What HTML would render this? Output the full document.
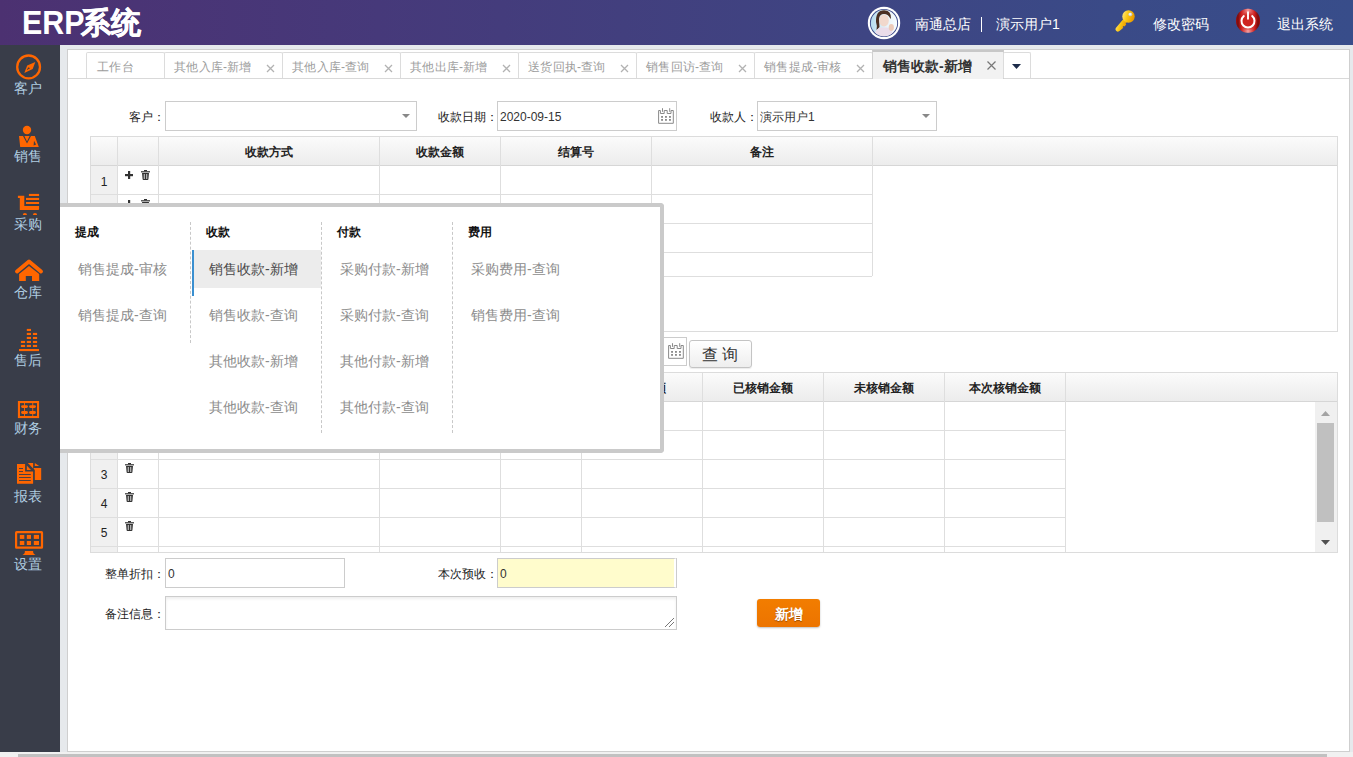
<!DOCTYPE html><html><head><meta charset="utf-8"><style>
*{box-sizing:border-box;margin:0;padding:0}
html,body{width:1353px;height:757px;overflow:hidden;background:#e6e9ec;font-family:"Liberation Sans",sans-serif;font-size:12px;color:#333}
div,span{position:absolute}
.t{white-space:nowrap;line-height:1}
#hdr{left:0;top:0;width:1353px;height:45px;background:linear-gradient(to right,#4c3171 0%,#4a3475 10%,#46397a 28%,#423f7e 46%,#3e4583 64%,#3a4a87 82%,#384d8a 100%)}
.ht{color:#fff;font-size:14px;top:17px}
#side{left:0;top:45px;width:60px;height:707px;background:#393d49}
.sl{left:-2px;width:60px;text-align:center;color:#b0cee2;font-size:14px}
.tab{top:52px;height:26px;border:1px solid #dcdcdc;border-bottom:none;background:#fff;border-radius:2px 2px 0 0}
.tabt{top:61px;color:#9c9c9c;font-size:12px;letter-spacing:0.25px}
.tabx{color:#a8a8a8;font-size:15px;top:59px}
.ln{background:#dedede}
.hd{font-weight:bold;color:#222;font-size:12px;text-align:center}
.lbl{font-size:12px;color:#222;text-align:right}
.inp{border:1px solid #ccc;background:#fff}
.pi{color:#8c8c8c;font-size:14px}
.ph{color:#111;font-size:12px;font-weight:bold}
.dash{width:0;border-left:1px dashed #c8c8c8}
</style></head><body>
<div id="hdr"></div>
<div class="t" style="left:22px;top:6px;color:#fff;font-size:33px;font-weight:bold;transform:scaleX(0.92);transform-origin:0 0">ERP</div>
<div class="t" style="left:81px;top:8px;color:#fff;font-size:30px;font-weight:900;-webkit-text-stroke:0.5px #fff">系统</div>
<svg style="position:absolute;left:867px;top:6px" width="34" height="34" viewBox="0 0 34 34">
<defs><linearGradient id="ab" x1="0" y1="0" x2="1" y2="0"><stop offset="0" stop-color="#a9d6ec"/><stop offset="0.55" stop-color="#e6f2f8"/><stop offset="1" stop-color="#ffffff"/></linearGradient>
<clipPath id="ac"><circle cx="17" cy="17" r="13.2"/></clipPath></defs>
<circle cx="17" cy="17" r="16.2" fill="#fff"/>
<circle cx="17" cy="17" r="14.1" fill="#3a4888"/>
<g clip-path="url(#ac)">
<rect x="0" y="0" width="34" height="34" fill="url(#ab)"/>
<path d="M9 16 Q8.5 4.5 17 4.3 Q24.5 4.5 24 13 L23 12 Q21 8 17 8 Q12.5 8 12 13 L12.5 21 Q11 23 9.5 24 Q10.5 20 9 16Z" fill="#4a2f22"/>
<ellipse cx="17" cy="14.5" rx="4.8" ry="6" fill="#f1d8cc"/>
<path d="M6 34 Q7 23 14 21.5 L20 21.5 Q26 23 28 34Z" fill="#eadcea"/>
<ellipse cx="24.3" cy="21.5" rx="2.6" ry="3.4" fill="#eccab8"/>
</g>
</svg>
<div class="t ht" style="left:915px">南通总店</div>
<div style="left:980.5px;top:17px;width:1.5px;height:15px;background:#fff"></div>
<div class="t ht" style="left:996px">演示用户1</div>
<svg style="position:absolute;left:1114px;top:8px" width="24" height="26" viewBox="0 0 24 26">
<defs><linearGradient id="kg" x1="0" y1="0" x2="1" y2="0.3"><stop offset="0" stop-color="#ffe98a"/><stop offset="0.5" stop-color="#fcc814"/><stop offset="1" stop-color="#e99a00"/></linearGradient></defs>
<path d="M9.2 11.2 L12.8 14.2 L11.6 15.6 L12.3 16.4 L10.4 18.5 L9.5 17.9 L8.6 19 L9.4 19.7 L5.4 23.1 Q3.2 24.5 1.9 22.6 Q1 21.2 1.8 20.1 Z" fill="url(#kg)"/>
<circle cx="14.5" cy="8.5" r="6.2" fill="url(#kg)"/>
<circle cx="16.3" cy="6.35" r="1.9" fill="#c9cfd6"/>
<circle cx="16.1" cy="6.1" r="1.1" fill="#f4f6f8"/>
</svg>
<div class="t ht" style="left:1153px">修改密码</div>
<svg style="position:absolute;left:1235px;top:8px" width="26" height="26" viewBox="0 0 26 26">
<defs><linearGradient id="pg" x1="0" y1="0" x2="1" y2="0"><stop offset="0" stop-color="#8a0000"/><stop offset="0.08" stop-color="#3a0000"/><stop offset="0.22" stop-color="#c81818"/><stop offset="0.5" stop-color="#ffd0d0"/><stop offset="0.78" stop-color="#c81818"/><stop offset="0.92" stop-color="#3a0000"/><stop offset="1" stop-color="#8a0000"/></linearGradient>
<radialGradient id="pr" cx="0.5" cy="0.5" r="0.5"><stop offset="0" stop-color="#cf2420"/><stop offset="0.62" stop-color="#cf2420"/><stop offset="1" stop-color="#cf2420" stop-opacity="0"/></radialGradient>
<linearGradient id="pv" x1="0" y1="0" x2="0" y2="1"><stop offset="0" stop-color="#e02a2a" stop-opacity="0.6"/><stop offset="0.5" stop-color="#c01818" stop-opacity="0.9"/><stop offset="1" stop-color="#e02a2a" stop-opacity="0.5"/></linearGradient></defs>
<circle cx="13" cy="12.7" r="12" fill="url(#pg)"/>
<circle cx="13" cy="12.7" r="12" fill="url(#pv)" opacity="0.55"/>
<circle cx="13" cy="13" r="9.5" fill="url(#pr)"/>
<path d="M8.82 8.02 A6.5 6.5 0 1 0 17.18 8.02" fill="none" stroke="#fff" stroke-width="2" stroke-linecap="round"/>
<line x1="13" y1="4.3" x2="13" y2="10.8" stroke="#fff" stroke-width="1.9" stroke-linecap="round"/>
</svg>
<div class="t ht" style="left:1277px">退出系统</div>
<div id="side"></div>
<svg style="position:absolute;left:14px;top:53px" width="30" height="28" viewBox="0 0 30 28"><circle cx="14.6" cy="13.9" r="11.4" fill="none" stroke="#ff6600" stroke-width="2.3"/><path d="M21.3 8.9 L18.7 15.9 L10.3 20.1 L13.2 12.5Z" fill="#ff6600"/><path d="M14.5 14.2 L16.2 15.3 L12.6 17Z" fill="#393d49"/></svg>
<div class="t sl" style="top:81px">客户</div>
<svg style="position:absolute;left:17px;top:124px" width="24" height="25" viewBox="0 0 24 25"><circle cx="10" cy="6" r="4.2" fill="#ff6600"/><path d="M2 12.1 L6 12.1 L10 19.4 L14 12.1 L17.8 12.1 L21.8 23.1 L3.2 23.1Z" fill="#ff6600"/><path d="M7.4 12.1 L12.6 12.1 L10 17.6Z" fill="#ff6600"/><path d="M17 16.7 L19.1 20.5 L16.6 21.4Z" fill="#393d49"/></svg>
<div class="t sl" style="top:149px">销售</div>
<svg style="position:absolute;left:17px;top:193px" width="24" height="24" viewBox="0 0 24 24"><path d="M0.9 2.8 L7.3 2.8 L7.3 13 L22.1 13 L22.1 16 Q22.1 17 21.1 17 L2.8 17 L2.8 5.1 L0.9 5.1Z" fill="#ff6600"/><rect x="11.9" y="0.9" width="10.2" height="2.1" fill="#ff6600"/><rect x="9" y="4.9" width="13.1" height="2.1" fill="#ff6600"/><rect x="9" y="9" width="13.1" height="2" fill="#ff6600"/><path d="M5.8 22 A2.1 2.1 0 0 1 10 22Z" fill="#ff6600"/><path d="M15.9 22 A2.1 2.1 0 0 1 20.1 22Z" fill="#ff6600"/></svg>
<div class="t sl" style="top:217px">采购</div>
<svg style="position:absolute;left:14px;top:257px" width="30" height="26" viewBox="0 0 30 26"><path d="M3 14.5 L15 4.4 L27 14.5" fill="none" stroke="#ff6600" stroke-width="3.9" stroke-linecap="round" stroke-linejoin="round"/><path d="M5.1 17.1 L15 9 L25.2 17.1 L25.2 24 L18 24 L18 19 L11.8 19 L11.8 24 L5.1 24Z" fill="#ff6600"/></svg>
<div class="t sl" style="top:285px">仓库</div>
<svg style="position:absolute;left:18px;top:328px" width="22" height="24" viewBox="0 0 22 24"><rect x="2.9" y="12.9" width="4.2" height="2.1" fill="#ff6600"/><rect x="2.9" y="16.9" width="4.2" height="2.1" fill="#ff6600"/><rect x="8.8" y="0.9" width="4.2" height="2.1" fill="#ff6600"/><rect x="8.8" y="4.9" width="4.2" height="2.1" fill="#ff6600"/><rect x="8.8" y="8.9" width="4.2" height="2.1" fill="#ff6600"/><rect x="8.8" y="12.9" width="4.2" height="2.1" fill="#ff6600"/><rect x="8.8" y="16.9" width="4.2" height="2.1" fill="#ff6600"/><rect x="14.9" y="4.9" width="4.2" height="2.1" fill="#ff6600"/><rect x="14.9" y="8.9" width="4.2" height="2.1" fill="#ff6600"/><rect x="14.9" y="12.9" width="4.2" height="2.1" fill="#ff6600"/><rect x="14.9" y="16.9" width="4.2" height="2.1" fill="#ff6600"/><rect x="1" y="21" width="20" height="2.1" fill="#ff6600"/></svg>
<div class="t sl" style="top:353px">售后</div>
<svg style="position:absolute;left:17px;top:400px" width="23" height="19" viewBox="0 0 23 19"><rect x="1.95" y="2.05" width="19.1" height="15" fill="none" stroke="#ff6600" stroke-width="2.1"/><rect x="7" y="3" width="0.9" height="13" fill="#ff6600"/><rect x="15.3" y="3" width="0.9" height="13" fill="#ff6600"/><rect x="4.1" y="5.2" width="6.8" height="2.8" rx="1.4" fill="#ff6600"/><rect x="12.1" y="5.2" width="6.8" height="2.8" rx="1.4" fill="#ff6600"/><rect x="4.1" y="11.1" width="6.8" height="2.8" rx="1.4" fill="#ff6600"/><rect x="12.1" y="11.1" width="6.8" height="2.8" rx="1.4" fill="#ff6600"/></svg>
<div class="t sl" style="top:421px">财务</div>
<svg style="position:absolute;left:17px;top:462px" width="26" height="24" viewBox="0 0 26 24"><path d="M0 1.9 L8.1 1.9 L8.1 9.5 L16.1 9.5 L16.1 21.8 L0 21.8Z" fill="#ff6600"/><rect x="2" y="6" width="4" height="0.9" fill="#393d49"/><rect x="2" y="9.1" width="4" height="0.9" fill="#393d49"/><rect x="2" y="12.1" width="11.8" height="0.9" fill="#393d49"/><rect x="2" y="15.1" width="11.8" height="0.9" fill="#393d49"/><rect x="2" y="18" width="11.8" height="0.9" fill="#393d49"/><path d="M9.8 3.6 L9.8 8 L14 8Z" fill="#ff6600"/><path d="M10.9 1.1 L16.1 1.1 L16.1 6.4Z" fill="#ff6600"/><path d="M17.8 1.1 L17.8 4 L22.1 4Z" fill="#ff6600"/><path d="M16.4 5.9 L24.2 5.9 L24.2 18 L17.8 18 L17.8 8.3Z" fill="#ff6600"/></svg>
<div class="t sl" style="top:489px">报表</div>
<svg style="position:absolute;left:14px;top:530px" width="30" height="26" viewBox="0 0 30 26"><rect x="2.1" y="2.2" width="25.9" height="15.5" rx="0.5" fill="none" stroke="#ff6600" stroke-width="2.2"/><rect x="5.8" y="4.9" width="4.5" height="4" fill="#ff6600"/><rect x="12.8" y="4.9" width="4.2" height="4" fill="#ff6600"/><rect x="19.8" y="4.9" width="5.2" height="4" fill="#ff6600"/><rect x="5.8" y="11" width="4.5" height="4" fill="#ff6600"/><rect x="12.8" y="11" width="4.2" height="4" fill="#ff6600"/><rect x="19.8" y="11" width="5.2" height="4" fill="#ff6600"/><path d="M10.9 20.9 L19.1 20.9 L19.3 23 Q19.8 24.2 21.5 25 L8.5 25 Q10.2 24.2 10.7 23Z" fill="#ff6600"/></svg>
<div class="t sl" style="top:557px">设置</div>
<div style="left:67px;top:49px;width:1283px;height:703px;background:#fff;border:1.5px solid #cfcfcf"></div>
<div class="ln" style="left:68px;top:78px;width:1281px;height:1px;background:#d9d9d9"></div>
<div class="tab" style="left:86px;width:79px"></div>
<div class="t tabt" style="left:97px">工作台</div>
<div class="tab" style="left:164px;width:119px"></div>
<div class="t tabt" style="left:174px">其他入库-新增</div>
<svg style="position:absolute;left:265.5px;top:63.5px" width="9" height="9" viewBox="0 0 9 9"><path d="M1 1 L8 8 M8 1 L1 8" stroke="#b2b2b2" stroke-width="1.3"/></svg>
<div class="tab" style="left:282px;width:119px"></div>
<div class="t tabt" style="left:292px">其他入库-查询</div>
<svg style="position:absolute;left:383.5px;top:63.5px" width="9" height="9" viewBox="0 0 9 9"><path d="M1 1 L8 8 M8 1 L1 8" stroke="#b2b2b2" stroke-width="1.3"/></svg>
<div class="tab" style="left:400px;width:119px"></div>
<div class="t tabt" style="left:410px">其他出库-新增</div>
<svg style="position:absolute;left:501.5px;top:63.5px" width="9" height="9" viewBox="0 0 9 9"><path d="M1 1 L8 8 M8 1 L1 8" stroke="#b2b2b2" stroke-width="1.3"/></svg>
<div class="tab" style="left:518px;width:119px"></div>
<div class="t tabt" style="left:528px">送货回执-查询</div>
<svg style="position:absolute;left:619.5px;top:63.5px" width="9" height="9" viewBox="0 0 9 9"><path d="M1 1 L8 8 M8 1 L1 8" stroke="#b2b2b2" stroke-width="1.3"/></svg>
<div class="tab" style="left:636px;width:119px"></div>
<div class="t tabt" style="left:646px">销售回访-查询</div>
<svg style="position:absolute;left:737.5px;top:63.5px" width="9" height="9" viewBox="0 0 9 9"><path d="M1 1 L8 8 M8 1 L1 8" stroke="#b2b2b2" stroke-width="1.3"/></svg>
<div class="tab" style="left:754px;width:119px"></div>
<div class="t tabt" style="left:764px">销售提成-审核</div>
<svg style="position:absolute;left:855.5px;top:63.5px" width="9" height="9" viewBox="0 0 9 9"><path d="M1 1 L8 8 M8 1 L1 8" stroke="#b2b2b2" stroke-width="1.3"/></svg>
<div style="left:872px;top:50px;width:132px;height:29px;background:#f2f2f2;border:1px solid #d0d0d0;border-top:2px solid #c8c8c8;border-bottom:none"></div>
<div class="t" style="left:883px;top:59px;font-size:14px;font-weight:bold;color:#333">销售收款-新增</div>
<svg style="position:absolute;left:987px;top:61px" width="9" height="9" viewBox="0 0 9 9"><path d="M0.5 0.5 L8.5 8.5 M8.5 0.5 L0.5 8.5" stroke="#777" stroke-width="1.2"/></svg>
<div class="tab" style="left:1003px;width:28px"></div>
<svg style="position:absolute;left:1012px;top:64px" width="9" height="5" viewBox="0 0 9 5"><path d="M0 0 L9 0 L4.5 5Z" fill="#1c2b4a"/></svg>
<div class="t lbl" style="left:44.5px;width:120px;top:111px">客户：</div>
<div class="inp" style="left:165px;top:101px;width:252px;height:30px"></div>
<svg style="position:absolute;left:402px;top:114px" width="8" height="4" viewBox="0 0 8 4"><path d="M0 0 L8 0 L4 4Z" fill="#888"/></svg>
<div class="t lbl" style="left:377.5px;width:120px;top:111px">收款日期：</div>
<div class="inp" style="left:497px;top:101px;width:180px;height:30px"></div>
<div class="t" style="left:500px;top:111px;font-size:12px;color:#333">2020-09-15</div>
<svg style="position:absolute;left:657px;top:108px" width="18" height="17" viewBox="0 0 18 17"><path d="M1.6 15.3 V2.5 H3.4 V5.5 H7.2 V2.5 H10.2 V5.5 H14 V2.5 H16.3 V15.3 Z" fill="none" stroke="#8a8a8a" stroke-width="1"/><rect x="5" y="0.2" width="1" height="3.6" fill="#8a8a8a"/><rect x="12.2" y="0.2" width="1" height="3.6" fill="#8a8a8a"/><rect x="4.1" y="8" width="1.9" height="1.8" fill="#8a8a8a"/><rect x="4.1" y="11" width="1.9" height="1.8" fill="#8a8a8a"/><rect x="8" y="8" width="1.9" height="1.8" fill="#8a8a8a"/><rect x="8" y="11" width="1.9" height="1.8" fill="#8a8a8a"/><rect x="12" y="8" width="1.9" height="1.8" fill="#8a8a8a"/><rect x="12" y="11" width="1.9" height="1.8" fill="#8a8a8a"/></svg>
<div class="t lbl" style="left:637.5px;width:120px;top:111px">收款人：</div>
<div class="inp" style="left:757px;top:101px;width:180px;height:30px"></div>
<div class="t" style="left:760px;top:111px;font-size:12px;color:#333">演示用户1</div>
<svg style="position:absolute;left:922px;top:114px" width="8" height="4" viewBox="0 0 8 4"><path d="M0 0 L8 0 L4 4Z" fill="#888"/></svg>
<div style="left:90px;top:136px;width:1248px;height:196px;border:1px solid #dcdcdc;background:#fff"></div>
<div style="left:91px;top:137px;width:1246px;height:28px;background:linear-gradient(#fbfbfb,#ececec)"></div>
<div style="left:91px;top:165px;width:1246px;height:1px;background:#d6d6d6"></div>
<div style="left:117px;top:137px;width:1px;height:28px;background:#dedede"></div>
<div style="left:158px;top:137px;width:1px;height:28px;background:#dedede"></div>
<div style="left:379px;top:137px;width:1px;height:28px;background:#dedede"></div>
<div style="left:500px;top:137px;width:1px;height:28px;background:#dedede"></div>
<div style="left:651px;top:137px;width:1px;height:28px;background:#dedede"></div>
<div style="left:872px;top:137px;width:1px;height:28px;background:#dedede"></div>
<div class="t hd" style="left:158px;width:221px;top:146px">收款方式</div>
<div class="t hd" style="left:379px;width:121px;top:146px">收款金额</div>
<div class="t hd" style="left:500px;width:151px;top:146px">结算号</div>
<div class="t hd" style="left:651px;width:221px;top:146px">备注</div>
<div style="left:91px;top:166px;width:26px;height:110px;background:#f0f0f0"></div>
<div style="left:91px;top:194px;width:781px;height:1px;background:#dedede"></div>
<div style="left:91px;top:223px;width:781px;height:1px;background:#dedede"></div>
<div style="left:91px;top:252px;width:781px;height:1px;background:#dedede"></div>
<div style="left:91px;top:276px;width:781px;height:1px;background:#dedede"></div>
<div style="left:117px;top:165px;width:1px;height:111px;background:#dedede"></div>
<div style="left:158px;top:165px;width:1px;height:111px;background:#dedede"></div>
<div style="left:379px;top:165px;width:1px;height:111px;background:#dedede"></div>
<div style="left:500px;top:165px;width:1px;height:111px;background:#dedede"></div>
<div style="left:651px;top:165px;width:1px;height:111px;background:#dedede"></div>
<div style="left:872px;top:165px;width:1px;height:111px;background:#dedede"></div>
<div class="t" style="left:91px;width:26px;text-align:center;top:176px;font-size:12px;color:#222">1</div>
<svg style="position:absolute;left:125px;top:171px" width="8" height="8" viewBox="0 0 8 8"><rect x="3" y="0" width="2.2" height="8" fill="#333"/><rect x="0" y="3" width="8" height="2.2" fill="#333"/></svg>
<svg style="position:absolute;left:141px;top:170px" width="9" height="10" viewBox="0 0 9 10"><rect x="0" y="1.2" width="9" height="1.2" fill="#333"/><rect x="3" y="0" width="3" height="1.2" fill="#333"/><path d="M1 3 L8 3 L7.4 9.2 Q7.3 10 6.5 10 L2.5 10 Q1.7 10 1.6 9.2Z" fill="#333"/><rect x="2.8" y="4" width="0.8" height="5" fill="#fff"/><rect x="5.4" y="4" width="0.8" height="5" fill="#fff"/></svg>
<svg style="position:absolute;left:125px;top:200px" width="8" height="8" viewBox="0 0 8 8"><rect x="3" y="0" width="2.2" height="8" fill="#333"/><rect x="0" y="3" width="8" height="2.2" fill="#333"/></svg>
<svg style="position:absolute;left:141px;top:199px" width="9" height="10" viewBox="0 0 9 10"><rect x="0" y="1.2" width="9" height="1.2" fill="#333"/><rect x="3" y="0" width="3" height="1.2" fill="#333"/><path d="M1 3 L8 3 L7.4 9.2 Q7.3 10 6.5 10 L2.5 10 Q1.7 10 1.6 9.2Z" fill="#333"/><rect x="2.8" y="4" width="0.8" height="5" fill="#fff"/><rect x="5.4" y="4" width="0.8" height="5" fill="#fff"/></svg>
<div class="inp" style="left:600px;top:337px;width:87px;height:29px"></div>
<svg style="position:absolute;left:667px;top:343px" width="18" height="17" viewBox="0 0 18 17"><path d="M1.6 15.3 V2.5 H3.4 V5.5 H7.2 V2.5 H10.2 V5.5 H14 V2.5 H16.3 V15.3 Z" fill="none" stroke="#8a8a8a" stroke-width="1"/><rect x="5" y="0.2" width="1" height="3.6" fill="#8a8a8a"/><rect x="12.2" y="0.2" width="1" height="3.6" fill="#8a8a8a"/><rect x="4.1" y="8" width="1.9" height="1.8" fill="#8a8a8a"/><rect x="4.1" y="11" width="1.9" height="1.8" fill="#8a8a8a"/><rect x="8" y="8" width="1.9" height="1.8" fill="#8a8a8a"/><rect x="8" y="11" width="1.9" height="1.8" fill="#8a8a8a"/><rect x="12" y="8" width="1.9" height="1.8" fill="#8a8a8a"/><rect x="12" y="11" width="1.9" height="1.8" fill="#8a8a8a"/></svg>
<div style="left:689px;top:340px;width:63px;height:28px;border:1px solid #c4c4c4;border-radius:3px;background:linear-gradient(#fff,#eee);box-shadow:0 1px 1px rgba(0,0,0,.08)"></div>
<div class="t" style="left:702px;top:347px;font-size:16px;color:#333;letter-spacing:4px">查询</div>
<div style="left:90px;top:372px;width:1248px;height:181px;border:1px solid #dcdcdc;background:#fff"></div>
<div style="left:91px;top:373px;width:1246px;height:28px;background:linear-gradient(#fbfbfb,#ececec)"></div>
<div style="left:91px;top:401px;width:1246px;height:1px;background:#d6d6d6"></div>
<div style="left:117px;top:373px;width:1px;height:28px;background:#dedede"></div>
<div style="left:158px;top:373px;width:1px;height:28px;background:#dedede"></div>
<div style="left:379px;top:373px;width:1px;height:28px;background:#dedede"></div>
<div style="left:500px;top:373px;width:1px;height:28px;background:#dedede"></div>
<div style="left:581px;top:373px;width:1px;height:28px;background:#dedede"></div>
<div style="left:702px;top:373px;width:1px;height:28px;background:#dedede"></div>
<div style="left:823px;top:373px;width:1px;height:28px;background:#dedede"></div>
<div style="left:944px;top:373px;width:1px;height:28px;background:#dedede"></div>
<div style="left:1065px;top:373px;width:1px;height:28px;background:#dedede"></div>
<div class="t hd" style="left:379px;width:121px;top:382px">单据日期</div>
<div class="t hd" style="left:500px;width:81px;top:382px">单据编号</div>
<div class="t hd" style="left:581px;width:121px;top:382px">单据金额</div>
<div class="t hd" style="left:702px;width:121px;top:382px">已核销金额</div>
<div class="t hd" style="left:823px;width:121px;top:382px">未核销金额</div>
<div class="t hd" style="left:944px;width:121px;top:382px">本次核销金额</div>
<div style="left:91px;top:402px;width:26px;height:150px;background:#f0f0f0"></div>
<div style="left:91px;top:430px;width:974px;height:1px;background:#dedede"></div>
<div style="left:91px;top:459px;width:974px;height:1px;background:#dedede"></div>
<div style="left:91px;top:488px;width:974px;height:1px;background:#dedede"></div>
<div style="left:91px;top:517px;width:974px;height:1px;background:#dedede"></div>
<div style="left:91px;top:546px;width:974px;height:1px;background:#dedede"></div>
<div style="left:117px;top:401px;width:1px;height:151px;background:#dedede"></div>
<div style="left:158px;top:401px;width:1px;height:151px;background:#dedede"></div>
<div style="left:379px;top:401px;width:1px;height:151px;background:#dedede"></div>
<div style="left:500px;top:401px;width:1px;height:151px;background:#dedede"></div>
<div style="left:581px;top:401px;width:1px;height:151px;background:#dedede"></div>
<div style="left:702px;top:401px;width:1px;height:151px;background:#dedede"></div>
<div style="left:823px;top:401px;width:1px;height:151px;background:#dedede"></div>
<div style="left:944px;top:401px;width:1px;height:151px;background:#dedede"></div>
<div style="left:1065px;top:401px;width:1px;height:151px;background:#dedede"></div>
<div class="t" style="left:91px;width:26px;text-align:center;top:411px;font-size:12px;color:#222">1</div>
<svg style="position:absolute;left:125px;top:405px" width="9" height="10" viewBox="0 0 9 10"><rect x="0" y="1.2" width="9" height="1.2" fill="#333"/><rect x="3" y="0" width="3" height="1.2" fill="#333"/><path d="M1 3 L8 3 L7.4 9.2 Q7.3 10 6.5 10 L2.5 10 Q1.7 10 1.6 9.2Z" fill="#333"/><rect x="2.8" y="4" width="0.8" height="5" fill="#fff"/><rect x="5.4" y="4" width="0.8" height="5" fill="#fff"/></svg>
<div class="t" style="left:91px;width:26px;text-align:center;top:440px;font-size:12px;color:#222">2</div>
<svg style="position:absolute;left:125px;top:434px" width="9" height="10" viewBox="0 0 9 10"><rect x="0" y="1.2" width="9" height="1.2" fill="#333"/><rect x="3" y="0" width="3" height="1.2" fill="#333"/><path d="M1 3 L8 3 L7.4 9.2 Q7.3 10 6.5 10 L2.5 10 Q1.7 10 1.6 9.2Z" fill="#333"/><rect x="2.8" y="4" width="0.8" height="5" fill="#fff"/><rect x="5.4" y="4" width="0.8" height="5" fill="#fff"/></svg>
<div class="t" style="left:91px;width:26px;text-align:center;top:469px;font-size:12px;color:#222">3</div>
<svg style="position:absolute;left:125px;top:463px" width="9" height="10" viewBox="0 0 9 10"><rect x="0" y="1.2" width="9" height="1.2" fill="#333"/><rect x="3" y="0" width="3" height="1.2" fill="#333"/><path d="M1 3 L8 3 L7.4 9.2 Q7.3 10 6.5 10 L2.5 10 Q1.7 10 1.6 9.2Z" fill="#333"/><rect x="2.8" y="4" width="0.8" height="5" fill="#fff"/><rect x="5.4" y="4" width="0.8" height="5" fill="#fff"/></svg>
<div class="t" style="left:91px;width:26px;text-align:center;top:498px;font-size:12px;color:#222">4</div>
<svg style="position:absolute;left:125px;top:492px" width="9" height="10" viewBox="0 0 9 10"><rect x="0" y="1.2" width="9" height="1.2" fill="#333"/><rect x="3" y="0" width="3" height="1.2" fill="#333"/><path d="M1 3 L8 3 L7.4 9.2 Q7.3 10 6.5 10 L2.5 10 Q1.7 10 1.6 9.2Z" fill="#333"/><rect x="2.8" y="4" width="0.8" height="5" fill="#fff"/><rect x="5.4" y="4" width="0.8" height="5" fill="#fff"/></svg>
<div class="t" style="left:91px;width:26px;text-align:center;top:527px;font-size:12px;color:#222">5</div>
<svg style="position:absolute;left:125px;top:521px" width="9" height="10" viewBox="0 0 9 10"><rect x="0" y="1.2" width="9" height="1.2" fill="#333"/><rect x="3" y="0" width="3" height="1.2" fill="#333"/><path d="M1 3 L8 3 L7.4 9.2 Q7.3 10 6.5 10 L2.5 10 Q1.7 10 1.6 9.2Z" fill="#333"/><rect x="2.8" y="4" width="0.8" height="5" fill="#fff"/><rect x="5.4" y="4" width="0.8" height="5" fill="#fff"/></svg>
<div style="left:1315px;top:402px;width:22px;height:150px;background:#f0f0f0"></div>
<div style="left:1317px;top:423px;width:17px;height:99px;background:#c0c0c0"></div>
<svg style="position:absolute;left:1321px;top:411px" width="9" height="5" viewBox="0 0 9 5"><path d="M0 5 L9 5 L4.5 0Z" fill="#a3a3a3"/></svg>
<svg style="position:absolute;left:1321px;top:540px" width="9" height="5" viewBox="0 0 9 5"><path d="M0 0 L9 0 L4.5 5Z" fill="#505050"/></svg>
<div class="t lbl" style="left:44.5px;width:120px;top:568px">整单折扣：</div>
<div class="inp" style="left:165px;top:558px;width:180px;height:30px"></div>
<div class="t" style="left:168px;top:568px;font-size:12px;color:#333">0</div>
<div class="t lbl" style="left:377.5px;width:120px;top:568px">本次预收：</div>
<div class="inp" style="left:497px;top:558px;width:180px;height:30px;background:#fffccc;border-right:3px solid #fff;box-shadow:inset -0px 0 0 #fff"></div>
<div style="left:676px;top:558px;width:1px;height:30px;background:#ccc"></div>
<div class="t" style="left:500px;top:568px;font-size:12px;color:#333">0</div>
<div class="t lbl" style="left:44.5px;width:120px;top:608px">备注信息：</div>
<div class="inp" style="left:165px;top:596px;width:512px;height:34px;box-shadow:inset 0 2px 3px rgba(0,0,0,.07)"></div>
<svg style="position:absolute;left:664px;top:617px" width="11" height="11" viewBox="0 0 11 11"><line x1="1" y1="10" x2="10" y2="1" stroke="#555" stroke-width="0.8"/><line x1="5" y1="10" x2="10" y2="5" stroke="#555" stroke-width="0.8"/></svg>
<div style="left:757px;top:599px;width:63px;height:28px;border-radius:3px;background:linear-gradient(#f27d00,#ec7400);box-shadow:0 1px 2px rgba(0,0,0,.25)"></div>
<div class="t" style="left:757px;width:63px;text-align:center;top:607px;font-size:14px;font-weight:bold;color:#fff;text-shadow:0 1px 1px rgba(0,0,0,.35)">新增</div>
<div style="left:60px;top:203px;width:604px;height:250px;background:#fff;border:4px solid #cacaca;border-left:none;border-radius:0 4px 4px 0"></div>
<div class="t ph" style="left:75px;top:226px">提成</div>
<div class="t pi" style="left:78px;top:262px;color:#8c8c8c">销售提成-审核</div>
<div class="t pi" style="left:78px;top:308px;color:#8c8c8c">销售提成-查询</div>
<div style="left:192px;top:250px;width:129px;height:38px;background:#ececec"></div>
<div style="left:192px;top:250px;width:2px;height:46px;background:#3a8fd0"></div>
<div class="t ph" style="left:206px;top:226px">收款</div>
<div class="t pi" style="left:209px;top:262px;color:#4a4a4a">销售收款-新增</div>
<div class="t pi" style="left:209px;top:308px;color:#8c8c8c">销售收款-查询</div>
<div class="t pi" style="left:209px;top:354px;color:#8c8c8c">其他收款-新增</div>
<div class="t pi" style="left:209px;top:400px;color:#8c8c8c">其他收款-查询</div>
<div class="t ph" style="left:337px;top:226px">付款</div>
<div class="t pi" style="left:340px;top:262px;color:#8c8c8c">采购付款-新增</div>
<div class="t pi" style="left:340px;top:308px;color:#8c8c8c">采购付款-查询</div>
<div class="t pi" style="left:340px;top:354px;color:#8c8c8c">其他付款-新增</div>
<div class="t pi" style="left:340px;top:400px;color:#8c8c8c">其他付款-查询</div>
<div class="t ph" style="left:468px;top:226px">费用</div>
<div class="t pi" style="left:471px;top:262px;color:#8c8c8c">采购费用-查询</div>
<div class="t pi" style="left:471px;top:308px;color:#8c8c8c">销售费用-查询</div>
<div class="dash" style="left:190px;top:222px;height:121px"></div>
<div class="dash" style="left:321px;top:222px;height:211px"></div>
<div class="dash" style="left:452px;top:222px;height:211px"></div>
<div style="left:0;top:752px;width:1353px;height:5px;background:#f1f1f1"></div>
<div style="left:18px;top:754px;width:1309px;height:3px;background:#c1c1c1"></div>
</body></html>
